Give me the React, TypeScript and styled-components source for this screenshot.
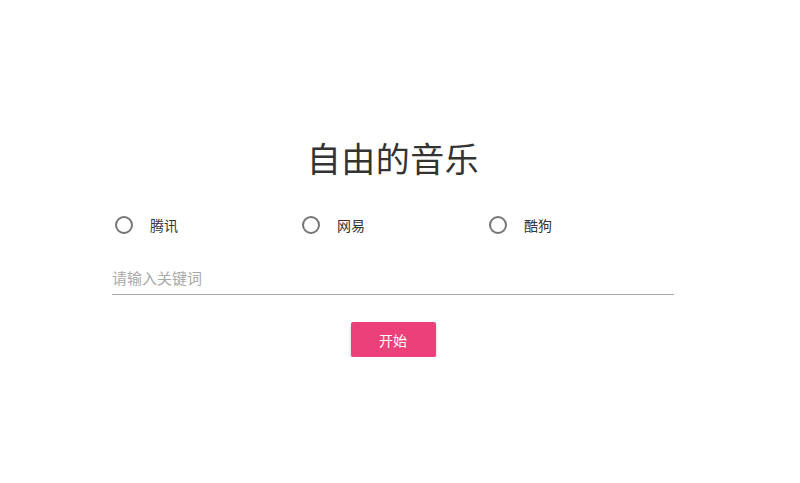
import React, { useState } from 'react'
import styled, { createGlobalStyle } from 'styled-components'

const GlobalStyle = createGlobalStyle`
  html, body {
    margin: 0;
    padding: 0;
    background: #ffffff;
  }
  body {
    font-family: 'Microsoft YaHei', 'Noto Sans CJK SC', 'Noto Sans', sans-serif;
    color: #333333;
  }
`

const Page = styled.div`
  width: 786px;
  padding-top: 134px;
  display: flex;
  justify-content: center;
`

const Panel = styled.div`
  width: 562px;
  display: flex;
  flex-direction: column;
`

const Title = styled.h1`
  margin: 0;
  text-align: center;
  font-size: 34px;
  font-weight: 400;
  line-height: 48px;
  color: #333333;
  letter-spacing: 0.5px;
`

const RadioGroup = styled.div`
  margin-top: 28px;
  padding-left: 3px;
  display: grid;
  grid-template-columns: repeat(3, 187px);
`

const RadioLabel = styled.label`
  display: flex;
  align-items: center;
  gap: 17px;
  height: 30px;
  cursor: pointer;
  font-size: 14px;
  color: #333333;
`

const Circle = styled.span<{ $checked: boolean }>`
  box-sizing: border-box;
  width: 18px;
  height: 18px;
  border-radius: 50%;
  border: 2px solid ${(p) => (p.$checked ? '#ec407a' : '#757575')};
  display: flex;
  align-items: center;
  justify-content: center;
  &::after {
    content: '';
    width: 8px;
    height: 8px;
    border-radius: 50%;
    background: #ec407a;
    display: ${(p) => (p.$checked ? 'block' : 'none')};
  }
`

const Field = styled.input`
  margin-top: 24px;
  box-sizing: border-box;
  width: 100%;
  height: 31px;
  padding: 0 0 4px;
  border: none;
  border-bottom: 1px solid #a8a8a8;
  outline: none;
  font-family: inherit;
  font-size: 15px;
  color: #333333;
  background: transparent;
  &::placeholder {
    color: #a9a9a9;
  }
`

const Actions = styled.div`
  margin-top: 27px;
  display: flex;
  justify-content: center;
`

const StartButton = styled.button`
  width: 85px;
  height: 35px;
  border: none;
  border-radius: 2px;
  background: #ec407a;
  color: #ffffff;
  font-family: inherit;
  font-size: 14px;
  cursor: pointer;
  box-shadow: 0 2px 3px rgba(0, 0, 0, 0.25);
`

const sources = ['腾讯', '网易', '酷狗']

export default function App() {
  const [source, setSource] = useState<string | null>(null)
  const [keyword, setKeyword] = useState('')

  return (
    <>
      <GlobalStyle />
      <Page>
        <Panel>
          <Title>自由的音乐</Title>
          <RadioGroup>
            {sources.map((s) => (
              <RadioLabel key={s} onClick={() => setSource(s)}>
                <Circle $checked={source === s} />
                {s}
              </RadioLabel>
            ))}
          </RadioGroup>
          <Field
            placeholder="请输入关键词"
            value={keyword}
            onChange={(e) => setKeyword(e.target.value)}
          />
          <Actions>
            <StartButton>开始</StartButton>
          </Actions>
        </Panel>
      </Page>
    </>
  )
}
